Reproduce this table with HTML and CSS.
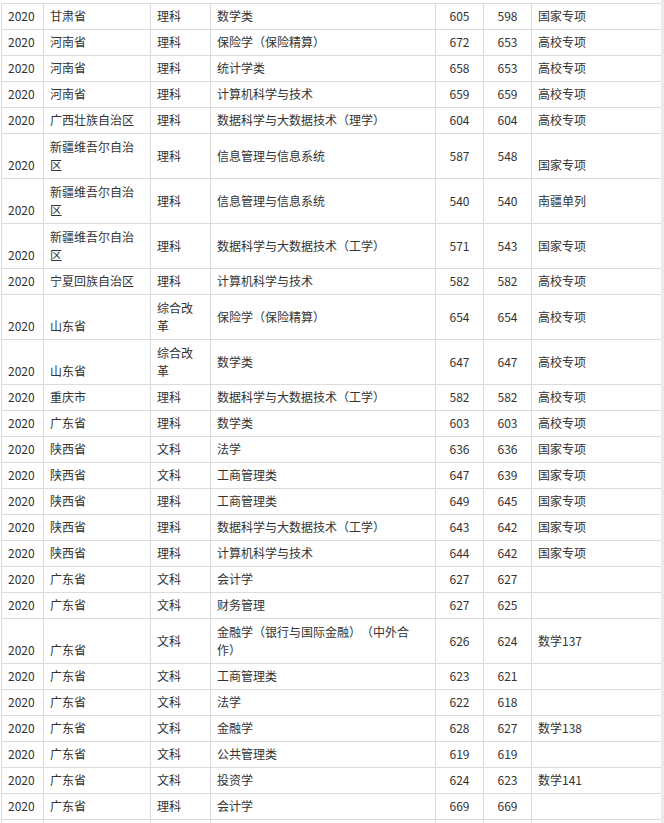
FILE: index.html
```html
<!DOCTYPE html>
<html lang="zh-CN">
<head>
<meta charset="utf-8">
<title>录取分数</title>
<link rel="stylesheet" href="styles.css">
</head>
<body>
<div class="page">
<table class="scores">
<colgroup>
<col class="c-year"><col class="c-prov"><col class="c-type"><col class="c-major"><col class="c-max"><col class="c-min"><col class="c-note">
</colgroup>
<tbody>
<tr><td class="yr">2020</td><td class="pv">甘肃省</td><td>理科</td><td>数学类</td><td class="num">605</td><td class="num">598</td><td>国家专项</td></tr>
<tr><td class="yr">2020</td><td class="pv">河南省</td><td>理科</td><td>保险学（保险精算）</td><td class="num">672</td><td class="num">653</td><td>高校专项</td></tr>
<tr><td class="yr">2020</td><td class="pv">河南省</td><td>理科</td><td>统计学类</td><td class="num">658</td><td class="num">653</td><td>高校专项</td></tr>
<tr><td class="yr">2020</td><td class="pv">河南省</td><td>理科</td><td>计算机科学与技术</td><td class="num">659</td><td class="num">659</td><td>高校专项</td></tr>
<tr><td class="yr">2020</td><td class="pv">广西壮族自治区</td><td>理科</td><td>数据科学与大数据技术（理学）</td><td class="num">604</td><td class="num">604</td><td>高校专项</td></tr>
<tr class="tall"><td class="yr">2020</td><td class="pv">新疆维吾尔自治区</td><td>理科</td><td>信息管理与信息系统</td><td class="num">587</td><td class="num">548</td><td class="low">国家专项</td></tr>
<tr class="tall"><td class="yr">2020</td><td class="pv">新疆维吾尔自治区</td><td>理科</td><td>信息管理与信息系统</td><td class="num">540</td><td class="num">540</td><td>南疆单列</td></tr>
<tr class="tall"><td class="yr">2020</td><td class="pv">新疆维吾尔自治区</td><td>理科</td><td>数据科学与大数据技术（工学）</td><td class="num">571</td><td class="num">543</td><td>国家专项</td></tr>
<tr><td class="yr">2020</td><td class="pv">宁夏回族自治区</td><td>理科</td><td>计算机科学与技术</td><td class="num">582</td><td class="num">582</td><td>高校专项</td></tr>
<tr class="tall"><td class="yr">2020</td><td class="pv">山东省</td><td>综合改革</td><td>保险学（保险精算）</td><td class="num">654</td><td class="num">654</td><td>高校专项</td></tr>
<tr class="tall"><td class="yr">2020</td><td class="pv">山东省</td><td>综合改革</td><td>数学类</td><td class="num">647</td><td class="num">647</td><td>高校专项</td></tr>
<tr><td class="yr">2020</td><td class="pv">重庆市</td><td>理科</td><td>数据科学与大数据技术（工学）</td><td class="num">582</td><td class="num">582</td><td>高校专项</td></tr>
<tr><td class="yr">2020</td><td class="pv">广东省</td><td>理科</td><td>数学类</td><td class="num">603</td><td class="num">603</td><td>高校专项</td></tr>
<tr><td class="yr">2020</td><td class="pv">陕西省</td><td>文科</td><td>法学</td><td class="num">636</td><td class="num">636</td><td>国家专项</td></tr>
<tr><td class="yr">2020</td><td class="pv">陕西省</td><td>文科</td><td>工商管理类</td><td class="num">647</td><td class="num">639</td><td>国家专项</td></tr>
<tr><td class="yr">2020</td><td class="pv">陕西省</td><td>理科</td><td>工商管理类</td><td class="num">649</td><td class="num">645</td><td>国家专项</td></tr>
<tr><td class="yr">2020</td><td class="pv">陕西省</td><td>理科</td><td>数据科学与大数据技术（工学）</td><td class="num">643</td><td class="num">642</td><td>国家专项</td></tr>
<tr><td class="yr">2020</td><td class="pv">陕西省</td><td>理科</td><td>计算机科学与技术</td><td class="num">644</td><td class="num">642</td><td>国家专项</td></tr>
<tr><td class="yr">2020</td><td class="pv">广东省</td><td>文科</td><td>会计学</td><td class="num">627</td><td class="num">627</td><td></td></tr>
<tr><td class="yr">2020</td><td class="pv">广东省</td><td>文科</td><td>财务管理</td><td class="num">627</td><td class="num">625</td><td></td></tr>
<tr class="tall"><td class="yr">2020</td><td class="pv">广东省</td><td>文科</td><td>金融学（银行与国际金融）（中外合作）</td><td class="num">626</td><td class="num">624</td><td>数学137</td></tr>
<tr><td class="yr">2020</td><td class="pv">广东省</td><td>文科</td><td>工商管理类</td><td class="num">623</td><td class="num">621</td><td></td></tr>
<tr><td class="yr">2020</td><td class="pv">广东省</td><td>文科</td><td>法学</td><td class="num">622</td><td class="num">618</td><td></td></tr>
<tr><td class="yr">2020</td><td class="pv">广东省</td><td>文科</td><td>金融学</td><td class="num">628</td><td class="num">627</td><td>数学138</td></tr>
<tr><td class="yr">2020</td><td class="pv">广东省</td><td>文科</td><td>公共管理类</td><td class="num">619</td><td class="num">619</td><td></td></tr>
<tr><td class="yr">2020</td><td class="pv">广东省</td><td>文科</td><td>投资学</td><td class="num">624</td><td class="num">623</td><td>数学141</td></tr>
<tr><td class="yr">2020</td><td class="pv">广东省</td><td>理科</td><td>会计学</td><td class="num">669</td><td class="num">669</td><td></td></tr>
<tr><td class="yr"></td><td class="pv"></td><td></td><td></td><td class="num"></td><td class="num"></td><td></td></tr>
</tbody>
</table>
</div>
</body>
</html>
```

FILE: styles.css
```css
html, body {
  margin: 0;
  padding: 0;
}
body {
  background: #ececec;
  font-family: "Noto Sans CJK SC", "Microsoft YaHei", sans-serif;
  font-size: 12px;
  color: #333;
  font-kerning: none;
  font-feature-settings: "chws" 0, "halt" 0, "palt" 0, "kern" 0;
  text-spacing-trim: space-all;
}
.page {
  width: 661px;
  background: #fff;
  padding-top: 3px;
  min-height: 823px;
  overflow: hidden;
}
.scores {
  border-collapse: collapse;
  table-layout: fixed;
  width: 660px;
  margin-left: 1px;
}
.c-year { width: 42px; }
.c-prov { width: 107px; }
.c-type { width: 60px; }
.c-major { width: 225px; }
.c-max { width: 48px; }
.c-min { width: 48px; }
.c-note { width: 130px; }
.scores tr {
  height: 26px;
}
.scores tr.tall {
  height: 45px;
}
.scores td {
  border: 1px solid #dcdcdc;
  padding: 3px 6px 4px 6px;
  line-height: 18px;
  vertical-align: middle;
  text-align: left;
  white-space: normal;
  word-break: normal;
}
.scores td.yr,
.scores td.pv,
.scores td.low {
  vertical-align: bottom;
}
.scores td.num {
  text-align: center;
  padding-left: 2px;
  padding-right: 2px;
}
```
